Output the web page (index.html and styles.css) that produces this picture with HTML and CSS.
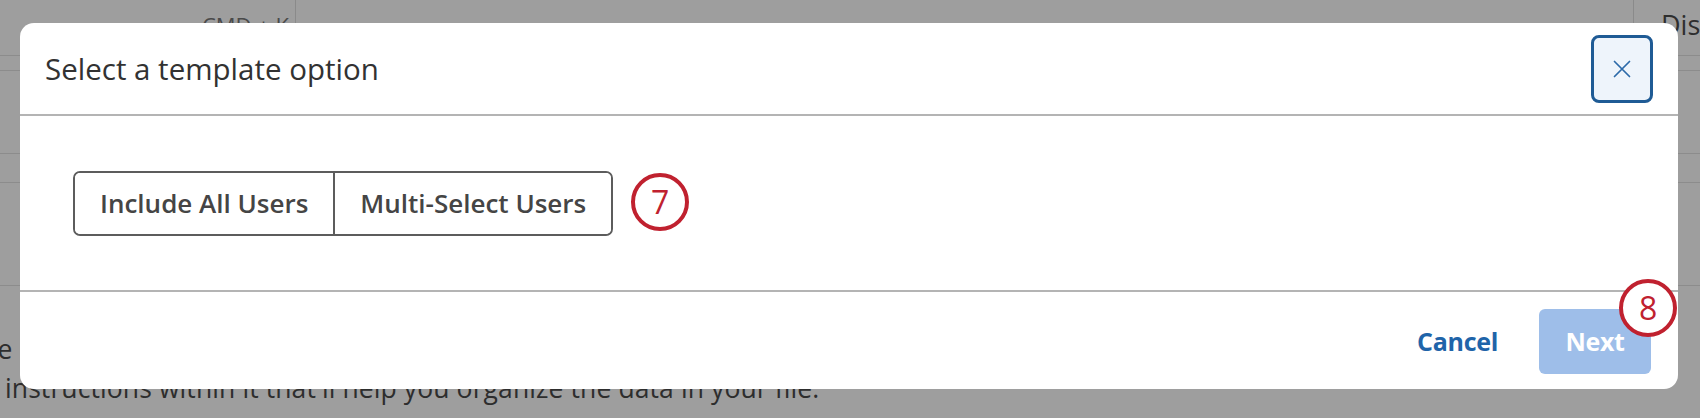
FILE: index.html
```html
<!DOCTYPE html>
<html lang="en">
<head>
<meta charset="utf-8">
<title>Select a template option</title>
<link rel="stylesheet" href="styles.css">
</head>
<body>
<div class="page">
  <div class="topbar">
    <div class="search-cell"><span class="kbd">CMD + K</span></div>
    <div class="top-spacer"></div>
    <div class="side-cell"><span class="side-title">Discover</span></div>
  </div>
  <div class="strip"></div>
  <div class="row-a"></div>
  <div class="row-b"></div>
  <div class="row-c"></div>
  <p class="copy">te  the template, which contains<br>instructions within it that'll help you organize the data in your file.</p>
</div>

<div class="modal" role="dialog" aria-labelledby="modal-title">
  <header class="modal-header">
    <h2 id="modal-title" class="modal-title">Select a template option</h2>
    <button class="close-btn" aria-label="Close">
      <svg width="18" height="18" viewBox="0 0 18 18" aria-hidden="true">
        <path d="M1.5 1.5 L16.5 16.5 M16.5 1.5 L1.5 16.5" stroke="#2d6aa9" stroke-width="1.7" fill="none" stroke-linecap="round"/>
      </svg>
    </button>
  </header>
  <section class="modal-body">
    <div class="seg-group">
      <button class="seg-btn">Include All Users</button>
      <button class="seg-btn seg-btn-last">Multi-Select Users</button>
    </div>
    <span class="marker">7</span>
  </section>
  <footer class="modal-footer">
    <button class="link-btn">Cancel</button>
    <button class="primary-btn" disabled>Next<span class="marker marker-badge">8</span></button>
  </footer>
</div>
</body>
</html>
```

FILE: styles.css
```css
* { box-sizing: border-box; }

html, body {
  margin: 0;
  padding: 0;
}

body {
  width: 1700px;
  height: 418px;
  overflow: hidden;
  background: #9e9e9e;
  font-family: "Open Sans", "Noto Sans", sans-serif;
  position: relative;
}

/* ---------- dimmed background page ---------- */
.page {
  width: 1700px;
  height: 418px;
  display: flex;
  flex-direction: column;
}

.topbar {
  height: 56px;
  flex: none;
  display: flex;
  border-bottom: 1px solid #8c8c8c;
}

.search-cell {
  width: 296px;
  border-right: 1px solid #8a8a8a;
  display: flex;
  justify-content: flex-end;
  padding: 10px 6px 0 0;
}

.kbd {
  font-size: 22px;
  color: #4a4a4a;
}

.top-spacer { flex: 1; }

.side-cell {
  width: 67px;
  border-left: 1px solid #8a8a8a;
  padding: 6px 0 0 27px;
  white-space: nowrap;
  overflow: hidden;
}

.side-title {
  font-size: 27px;
  color: #2e2e2e;
}

.strip {
  height: 15px;
  flex: none;
  border-bottom: 1px solid #8c8c8c;
}

.row-a {
  height: 83px;
  flex: none;
  border-bottom: 1px solid #8c8c8c;
}

.row-b {
  height: 29px;
  flex: none;
  border-bottom: 1px solid #8c8c8c;
}

.row-c {
  height: 103px;
  flex: none;
  border-bottom: 1px solid #8c8c8c;
}

.copy {
  margin: 44px 0 0 0;
  padding-left: 5px;
  text-indent: -17px;
  font-size: 26.5px;
  line-height: 39px;
  color: #2d2d2d;
  letter-spacing: 0.1px;
  white-space: pre;
}

/* ---------- modal ---------- */
.modal {
  position: absolute;
  left: 20px;
  top: 23px;
  width: 1658px;
  height: 366px;
  background: #ffffff;
  border-radius: 14px;
  display: flex;
  flex-direction: column;
  overflow: hidden;
}

.modal-header {
  height: 93px;
  flex: none;
  display: flex;
  align-items: center;
  justify-content: space-between;
  padding: 0 25px 0 25px;
  border-bottom: 2px solid #b4b4b4;
}

.modal-title {
  margin: 0;
  font-size: 29.5px;
  font-weight: 400;
  color: #323232;
}

.close-btn {
  width: 62px;
  height: 68px;
  margin-top: 1px;
  border: 3px solid #1f5b95;
  border-radius: 8px;
  background: #eef4fb;
  display: flex;
  align-items: center;
  justify-content: center;
  padding: 0;
}

.modal-body {
  flex: 1;
  display: flex;
  align-items: center;
  gap: 18px;
  padding-left: 53px;
  border-bottom: 2px solid #b4b4b4;
}

.seg-group {
  display: flex;
  height: 65px;
  border: 2px solid #5c5c5c;
  border-radius: 7px;
  overflow: hidden;
}

.seg-btn {
  border: none;
  background: #ffffff;
  padding: 0 25px;
  font-family: "Open Sans", "Noto Sans", sans-serif;
  font-size: 26px;
  font-weight: 600;
  color: #454545;
  letter-spacing: 0;
}

.seg-btn-last {
  border-left: 2px solid #5c5c5c;
}

.marker {
  width: 58px;
  height: 58px;
  border: 4px solid #c0212f;
  border-radius: 50%;
  background: #ffffff;
  color: #c0212f;
  font-family: "Open Sans", "Noto Sans", sans-serif;
  font-size: 32px;
  font-weight: 500;
  line-height: 1;
  display: flex;
  align-items: center;
  justify-content: center;
  margin-top: -2px;
}

.modal-footer {
  height: 97px;
  flex: none;
  display: flex;
  align-items: center;
  justify-content: flex-end;
  gap: 21px;
  padding: 0 27px 0 0;
}

.link-btn {
  border: none;
  background: transparent;
  padding: 0 20px;
  height: 65px;
  font-family: "Open Sans", "Noto Sans", sans-serif;
  font-size: 25px;
  font-weight: 700;
  color: #1f64a9;
  letter-spacing: -0.3px;
}

.primary-btn {
  position: relative;
  width: 112px;
  height: 65px;
  border: none;
  border-radius: 6px;
  background: #9ebee9;
  color: #ffffff;
  font-family: "Open Sans", "Noto Sans", sans-serif;
  font-size: 25px;
  font-weight: 700;
  letter-spacing: -0.3px;
  padding: 0;
  margin-top: 1px;
}

.marker-badge {
  position: absolute;
  top: -30px;
  right: -26px;
  margin: 0;
}
```
